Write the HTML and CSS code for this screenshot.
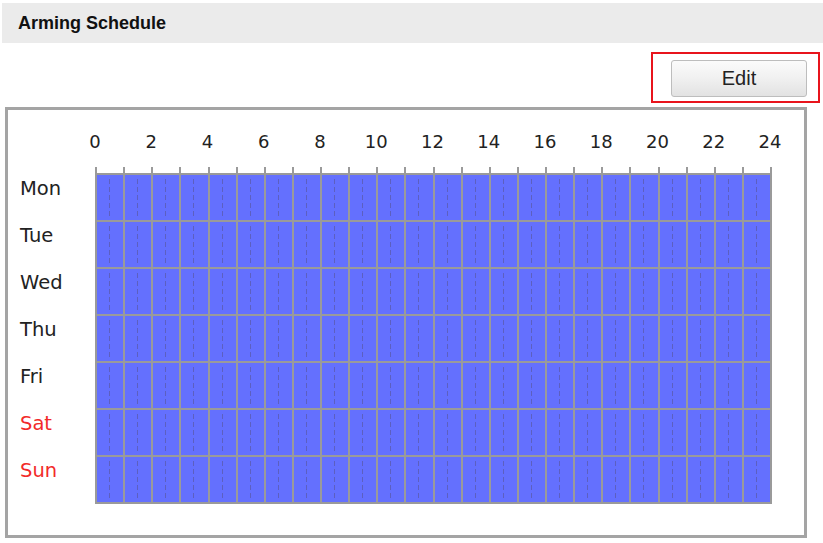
FILE: index.html
```html
<!DOCTYPE html>
<html>
<head>
<meta charset="utf-8">
<link rel="stylesheet" href="styles.css">
</head>
<body>
<div class="section-title">Arming Schedule</div>
<div class="toolbar">
  <div class="highlight"><button class="btn">Edit</button></div>
</div>
<div class="schedule">
  <div class="corner"></div>
  <div class="hours">
    <span>0</span><span>2</span><span>4</span><span>6</span><span>8</span><span>10</span><span>12</span><span>14</span><span>16</span><span>18</span><span>20</span><span>22</span><span>24</span>
  </div>
  <div class="days">
    <div class="day">Mon</div>
    <div class="day">Tue</div>
    <div class="day">Wed</div>
    <div class="day">Thu</div>
    <div class="day">Fri</div>
    <div class="day weekend">Sat</div>
    <div class="day weekend">Sun</div>
  </div>
  <div class="chart-wrap">
    <div class="ticks"></div>
    <div class="chart">
      <div class="row"></div>
      <div class="row"></div>
      <div class="row"></div>
      <div class="row"></div>
      <div class="row"></div>
      <div class="row"></div>
      <div class="row"></div>
    </div>
  </div>
</div>
</body>
</html>
```
FILE: styles.css
```css
html, body {
  margin: 0;
  padding: 0;
  background: #ffffff;
}
body {
  width: 823px;
  height: 543px;
  overflow: hidden;
  font-family: "Liberation Sans", Arial, sans-serif;
}
.section-title {
  margin: 3px 0 0 2px;
  height: 40px;
  line-height: 40px;
  padding-left: 16px;
  background: #ebebeb;
  font-weight: bold;
  font-size: 18px;
  color: #111;
}
.toolbar {
  display: flex;
  justify-content: flex-end;
  margin-top: 9px;
  padding-right: 3px;
}
.highlight {
  border: 2px solid #e8141c;
  padding: 6px 11px 4px 18px;
  display: flex;
}
.btn {
  width: 136px;
  height: 37px;
  border: 1px solid #bdbdbd;
  border-radius: 3px;
  background: linear-gradient(to bottom, #fbfbfb 0%, #f0f0f0 50%, #e2e2e2 100%);
  font-family: "Liberation Sans", Arial, sans-serif;
  font-size: 20px;
  color: #222;
  padding: 0;
  display: flex;
  align-items: center;
  justify-content: center;
}
.schedule {
  margin: 4px 0 0 5px;
  width: 796px;
  border: 3px solid #a4a4a4;
  padding: 21px 0 31px 0;
  display: grid;
  grid-template-columns: 87px 677px;
  grid-template-rows: 21px auto;
  font-family: "DejaVu Sans", Verdana, sans-serif;
  font-size: 18px;
  color: #222;
}
.hours {
  display: flex;
  margin-left: -28.125px;
  line-height: 21px;
}
.hours span {
  flex: 0 0 56.25px;
  text-align: center;
}
.days {
  padding-top: 21px;
  padding-left: 12px;
  font-size: 19.5px;
}
.day {
  height: 47px;
  line-height: 21px;
  padding-top: 5px;
  box-sizing: border-box;
}
.weekend {
  color: #f22a2a;
}
.chart-wrap {
  padding-top: 15px;
}
.ticks {
  height: 6px;
  background: repeating-linear-gradient(to right, #9a9a9a 0 2px, transparent 2px 28.125px);
}
.chart {
  width: 677px;
  border-top: 2px solid #9a9a9a;
}
.row {
  position: relative;
  height: 45px;
  border-bottom: 2px solid #9a9a9a;
  background-color: #6470fe;
  background-image: repeating-linear-gradient(to right, #9a9a9a 0 2px, transparent 2px 28.125px);
}
.row::before {
  content: "";
  position: absolute;
  inset: 4px 0 4px 0;
  background-image: repeating-linear-gradient(to right, transparent 0 14px, rgba(90, 90, 170, 0.75) 14px 15px, transparent 15px 28.125px);
  -webkit-mask-image: repeating-linear-gradient(to bottom, #000 0 5px, transparent 5px 8px);
  mask-image: repeating-linear-gradient(to bottom, #000 0 5px, transparent 5px 8px);
}
```
